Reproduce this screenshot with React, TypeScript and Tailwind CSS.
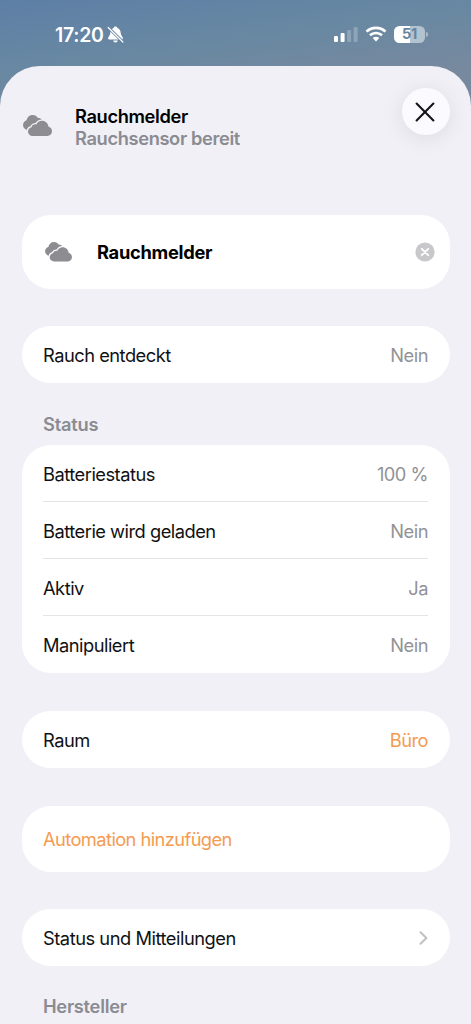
import React, { useId } from "react";

type CloudProps = { className?: string };

function SmokeCloud({ className = "" }: CloudProps) {
  const gap = useId();
  const front =
    "M9.6 20.6C7 20.6 4.9 18.7 4.9 16.2C4.9 14 6.4 12.3 8.4 11.9C8.9 9.9 10.9 8.8 13 9.3C14 7 16.1 5.6 18.6 5.6C21.9 5.6 24.6 8.1 24.9 11.4C27 12 28.4 13.8 28.4 16C28.4 18.6 26.3 20.6 23.7 20.6Z";
  return (
    <svg viewBox="0 0 28.4 20.6" className={className} fill="#8c8c91" aria-hidden="true">
      <mask id={gap}>
        <rect width="29" height="21" fill="#fff" />
        <path d={front} fill="#000" stroke="#000" strokeWidth="2.6" />
      </mask>
      <path
        mask={`url(#${gap})`}
        d="M4.7 14.6C2 14.6 0 12.4 0 9.9C0 7.5 1.5 5.8 3.5 5.2C4 2.2 6.4 0 9.4 0C11.7 0 13.6 1.2 14.6 3C16.2 2.8 17.6 3.4 18.3 4.6L19 14.6Z"
      />
      <path d={front} />
    </svg>
  );
}

function StatusBar() {
  return (
    <div className="flex h-[66px] items-start justify-between pl-[55px] pr-[43px] text-white">
      <div className="flex pt-[23px]">
        <span className="w-[50px] whitespace-nowrap text-[19.5px] font-semibold leading-6 tracking-[-0.3px]">17:20</span>
        <svg className="ml-[2px] mt-[3px] h-[18px] w-[18px]" viewBox="0 0 18 18" aria-label="Stumm">
          <path fill="currentColor" d="M8.5.5C9.5.5 10.3 1.2 10.4 2.1C12.6 2.8 13.6 4.8 13.7 7.1C13.8 9.5 15.6 10.6 15.9 12.3C16 13 15.6 13.4 14.9 13.4H2.1C1.4 13.4 1 13 1.1 12.3C1.4 10.6 3.2 9.5 3.3 7.1C3.4 4.8 4.4 2.8 6.6 2.1C6.7 1.2 7.5.5 8.5.5ZM6.2 14.5H10.8C10.6 15.7 9.7 16.5 8.5 16.5C7.3 16.5 6.4 15.7 6.2 14.5Z" />
          <path d="M1.3 1.5L16 16" stroke="#6585a3" strokeWidth="3" />
          <path d="M1.2 1.5L15.9 16" stroke="currentColor" strokeWidth="1.2" strokeLinecap="round" />
        </svg>
      </div>
      <div className="flex pt-[26px]">
        <svg className="mt-[1px] h-4 w-6" viewBox="0 0 24 16" fill="currentColor" aria-label="Empfang">
          <rect x="0" y="9" width="4" height="6" rx="1.1" />
          <rect x="6.6" y="6" width="4" height="9" rx="1.1" />
          <rect x="13.1" y="3" width="4" height="12" rx="1.1" opacity=".24" />
          <rect x="19.6" y="0" width="4" height="15" rx="1.1" opacity=".24" />
        </svg>
        <svg className="ml-[7px] h-4 w-[22px]" viewBox="0 0 22 16" fill="none" stroke="currentColor" strokeWidth="2.7" aria-label="WLAN">
          <path d="M1.5 5.6C6.8.5 15.2.5 20.5 5.6" />
          <path d="M5 9.3C8.4 6.2 13.6 6.2 17 9.3" />
          <path d="M7.7 12.1C9.5 10.4 12.5 10.4 14.3 12.1L11 15.4Z" fill="currentColor" stroke="none" />
        </svg>
        <div className="ml-[7px] flex items-center">
          <div className="flex h-[17px] w-[31px] items-center justify-center rounded-[5.5px] bg-[linear-gradient(90deg,#fff_0_51%,#b3c2cf_51%_100%)] text-[14.5px] font-bold leading-none tracking-[-0.3px] text-[#6785a0]">
            51
          </div>
          <div className="ml-[1px] h-[5px] w-[2px] rounded-r-full bg-[#a9bac9]" />
        </div>
      </div>
    </div>
  );
}

type RowProps = {
  label: string;
  value?: string;
  valueClass?: string;
  divider?: boolean;
};

function Row({ label, value, valueClass = "text-[#929296]", divider = false }: RowProps) {
  return (
    <div className={`flex h-[57px] items-center justify-between whitespace-nowrap pt-[1px] ${divider ? "border-b border-[#e4e4e6]" : ""}`}>
      <span>{label}</span>
      {value && <span className={valueClass}>{value}</span>}
    </div>
  );
}

export default function App() {
  return (
    <main className="h-[1024px] w-full overflow-hidden bg-[linear-gradient(172deg,#5d7fa6_0px,#6888a2_70px,#77899f_130px)] font-['Inter',sans-serif] text-[18.3px] leading-6 tracking-[-0.5px] text-[#111113]">
      <StatusBar />
      <section className="mr-[0.5px] h-[958px] rounded-t-[40px] bg-[#f1f0f6]">
        <header className="flex h-[149px] items-start justify-between pl-[23px] pr-[21px]">
          <div className="flex">
            <SmokeCloud className="mt-[49px] h-[21px] w-[29px]" />
            <div className="ml-[23px] mt-[39px] whitespace-nowrap font-semibold leading-[22px] tracking-[-0.37px]">
              <h1 className="text-black">Rauchmelder</h1>
              <p className="text-[#8b8b92]">Rauchsensor bereit</p>
            </div>
          </div>
          <button aria-label="Schließen" className="mt-[21.5px] flex size-[47.5px] items-center justify-center rounded-full bg-[#fafaff] shadow-[0_3px_22px_rgba(0,0,0,0.09)]">
            <svg className="mr-[1px] mt-[1px] size-5" viewBox="0 0 20 20" fill="none" stroke="#151517" strokeWidth="2.1" strokeLinecap="round">
              <path d="M1.6 1.6L18.4 18.4M18.4 1.6L1.6 18.4" />
            </svg>
          </button>
        </header>

        <div className="ml-[21.5px] mr-[21px]">
          <div className="flex h-[74px] items-center rounded-[29px] bg-white pl-[23px] pr-[15px]">
            <SmokeCloud className="h-[19.5px] w-[27px]" />
            <span className="ml-[25.5px] flex-1 font-bold tracking-[-0.3px] text-black">Rauchmelder</span>
            <svg className="size-5" viewBox="0 0 20 20" aria-label="Löschen">
              <circle cx="10" cy="10" r="9.6" fill="#c8c8ca" />
              <path d="M6.8 6.8L13.2 13.2M13.2 6.8L6.8 13.2" stroke="#fff" strokeWidth="1.9" strokeLinecap="round" />
            </svg>
          </div>

          <div className="mt-[37.4px] rounded-[28.5px] bg-white px-[21.5px]">
            <Row label="Rauch entdeckt" value="Nein" />
          </div>

          <h2 className="mt-[28.5px] pl-[21.5px] font-semibold tracking-[-0.2px] text-[#8b8b92]">Status</h2>

          <div className="mt-[9.5px] rounded-[29px] bg-white px-[21.5px]">
            <Row label="Batteriestatus" value="100 %" divider />
            <Row label="Batterie wird geladen" value="Nein" divider />
            <Row label="Aktiv" value="Ja" divider />
            <Row label="Manipuliert" value="Nein" />
          </div>

          <div className="mt-[38px] rounded-[28.5px] bg-white px-[21.5px]">
            <Row label="Raum" value="Büro" valueClass="text-[#f49b51]" />
          </div>

          <div className="mt-[37.7px] flex h-[65.5px] items-center rounded-[29px] bg-white px-[21.5px]">
            <span className="tracking-[-0.58px] text-[#f49b51]">Automation hinzufügen</span>
          </div>

          <div className="mt-[37.5px] flex h-[57px] items-center justify-between rounded-[28.5px] bg-white px-[21.5px]">
            <span className="tracking-[-0.47px]">Status und Mitteilungen</span>
            <svg className="h-[14px] w-[9px]" viewBox="0 0 9 14" fill="none" stroke="#c1c1c4" strokeWidth="2" strokeLinecap="round" strokeLinejoin="round">
              <path d="M1.5 1.2L7.4 7L1.5 12.8" />
            </svg>
          </div>

          <h2 className="mt-[28.2px] pl-[21.5px] font-semibold tracking-[-0.28px] text-[#8b8b92]">Hersteller</h2>
        </div>
      </section>
    </main>
  );
}
